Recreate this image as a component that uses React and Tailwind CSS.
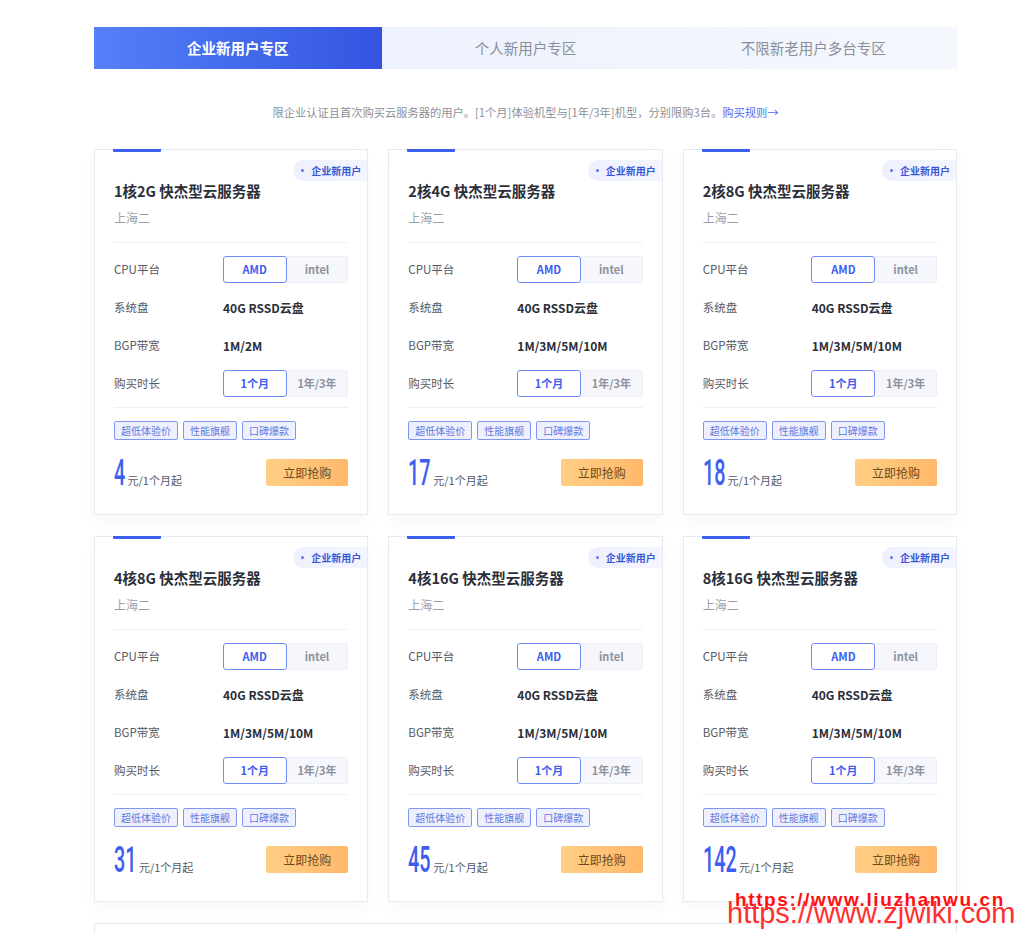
import React from "react";

const cards = [
  { title: "1核2G 快杰型云服务器", bw: "1M/2M", price: "4", mr: "mr-[-9px]" },
  { title: "2核4G 快杰型云服务器", bw: "1M/3M/5M/10M", price: "17", mr: "mr-[-18px]" },
  { title: "2核8G 快杰型云服务器", bw: "1M/3M/5M/10M", price: "18", mr: "mr-[-18px]" },
  { title: "4核8G 快杰型云服务器", bw: "1M/3M/5M/10M", price: "31", mr: "mr-[-18px]" },
  { title: "4核16G 快杰型云服务器", bw: "1M/3M/5M/10M", price: "45", mr: "mr-[-18px]" },
  { title: "8核16G 快杰型云服务器", bw: "1M/3M/5M/10M", price: "142", mr: "mr-[-27px]" },
];

function Segment({ a, b }) {
  return (
    <div className="flex w-[126px] h-[27px]">
      <div className="w-[64px] flex items-center justify-center border border-[#6f8bf4] rounded-[3px] bg-white text-[11px] font-bold text-[#3d5cf0]">
        {a}
      </div>
      <div className="flex-1 flex items-center justify-center border border-l-0 border-[#eceff6] rounded-r-[3px] bg-[#f5f7fc] text-[11px] font-bold text-[#8d919c]">
        {b}
      </div>
    </div>
  );
}

function Row({ label, children }) {
  return (
    <div className="flex items-center h-[27px]">
      <div className="w-[109px] text-[11.5px] text-[#555a66]">{label}</div>
      {children}
    </div>
  );
}

function Card({ c }) {
  return (
    <div className="relative bg-white border border-[#e7eaf3] shadow-[0_8px_14px_rgba(20,30,60,0.03)] px-[19px] pt-[31px] pb-[28px]">
      <div className="absolute top-[-1px] left-[18px] w-[48px] h-[3px] bg-[#3b5ff0] rounded-b-[1px]" />
      <div className="absolute top-[10px] right-0 h-[21px] flex items-center pl-[8px] pr-[6px] rounded-l-full bg-gradient-to-r from-[#eef1fd] to-[#f3f5fe]">
        <span className="w-[3px] h-[3px] rounded-full bg-[#5b77f0]" />
        <span className="ml-[7px] text-[10px] font-bold text-[#3a57d6] leading-none">企业新用户</span>
      </div>
      <div className="text-[14.5px] font-bold leading-[20px] text-[#2b2f3a]">{c.title}</div>
      <div className="mt-2 text-[12px] leading-[18px] text-[#9a9ea8]">上海二</div>
      <div className="mt-[15px] h-px bg-[#eef0f5]" />
      <div className="mt-[13px] flex flex-col gap-[11px]">
        <Row label="CPU平台">
          <Segment a="AMD" b="intel" />
        </Row>
        <Row label="系统盘">
          <span className="text-[12px] font-bold text-[#2b2f3a]">40G RSSD云盘</span>
        </Row>
        <Row label="BGP带宽">
          <span className="text-[12px] font-bold text-[#2b2f3a]">{c.bw}</span>
        </Row>
        <Row label="购买时长">
          <Segment a="1个月" b="1年/3年" />
        </Row>
      </div>
      <div className="mt-[10px] h-px bg-[#eef0f5]" />
      <div className="mt-[13px] flex gap-[5px]">
        {["超低体验价", "性能旗舰", "口碑爆款"].map((t) => (
          <span
            key={t}
            className="h-[19px] flex items-center px-[6px] border border-[#7f97f1] bg-[#eef1fd] rounded-[2px] text-[10px] text-[#6378e0]"
          >
            {t}
          </span>
        ))}
      </div>
      <div className="mt-[19px] h-[27px] flex items-center justify-between">
        <div className="flex items-baseline">
          <span
            className={`inline-block origin-left scale-x-[0.55] text-[36px] leading-none font-medium text-[#3d5ef0] ${c.mr}`}
            style={{ fontFamily: "Roboto, 'Liberation Sans', sans-serif" }}
          >
            {c.price}
          </span>
          <span className="ml-[2px] text-[11px] text-[#555a66]">元/1个月起</span>
        </div>
        <button className="w-[82px] h-[27px] rounded-[2px] bg-gradient-to-r from-[#ffcf85] to-[#ffb869] text-[12px] text-[#6b4a1f]">
          立即抢购
        </button>
      </div>
    </div>
  );
}

export default function App() {
  return (
    <div
      className="relative h-[934px] overflow-hidden bg-white"
      style={{ fontFamily: "'Noto Sans CJK SC', 'Noto Sans', sans-serif" }}
    >
      <div className="ml-[94px] w-[863px] pt-[27px]">
        <div className="flex h-[42px]">
          <div className="flex-1 flex items-center justify-center bg-gradient-to-r from-[#5480f8] to-[#3454e0] text-white text-[14.5px] font-bold">
            企业新用户专区
          </div>
          <div className="flex-[2] flex bg-gradient-to-r from-[#eef2fd] to-[#f5f7fe]">
            <div className="flex-1 flex items-center justify-center text-[14.5px] text-[#8b8f99]">个人新用户专区</div>
            <div className="flex-1 flex items-center justify-center text-[14.5px] text-[#8b8f99]">不限新老用户多台专区</div>
          </div>
        </div>
        <div className="mt-[34px] text-center text-[11.25px] leading-[18px] text-[#8c9099]">
          限企业认证且首次购买云服务器的用户。[1个月]体验机型与[1年/3年]机型，分别限购3台。
          <span className="text-[#4c6ef5]">购买规则→</span>
        </div>
        <div className="mt-[28px] grid grid-cols-3 gap-x-5 gap-y-[21px]">
          {cards.map((c) => (
            <Card key={c.title} c={c} />
          ))}
          <div className="col-span-3 h-[200px] border border-[#e7eaf3] bg-white" />
        </div>
      </div>
      <div
        className="absolute left-[735px] top-[890px] text-[19px] font-bold tracking-[1.6px] text-[#ff1010] leading-none"
        style={{ fontFamily: "'Liberation Sans', sans-serif" }}
      >
        https://www.liuzhanwu.cn
      </div>
      <div
        className="absolute left-[727px] top-[899px] text-[29px] text-[#ff3030] leading-none"
        style={{ fontFamily: "'Liberation Sans', sans-serif" }}
      >
        https://www.zjwiki.com
      </div>
    </div>
  );
}
